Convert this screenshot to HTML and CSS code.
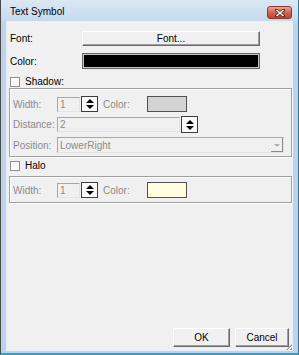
FILE: index.html
```html
<!DOCTYPE html>
<html lang="en">
  <head>
    <meta charset="UTF-8" />
    <title>Text Symbol</title>
    <link rel="stylesheet" href="styles.css">
  </head>
  <body>
    <div class="window">
      <div class="titlebar">
        <span class="title">Text Symbol</span>
        <span class="close">
          <svg width="10" height="8" viewBox="0 0 10 8">
            <path d="M1.5 1 L8.5 7 M8.5 1 L1.5 7" stroke="#5a2418" stroke-width="3" stroke-linecap="square" />
            <path d="M1.5 1 L8.5 7 M8.5 1 L1.5 7" stroke="#fff" stroke-width="1.6" />
          </svg>
        </span>
      </div>

      <div class="client">
        <div class="row font-row">
          <span class="lbl">Font:</span>
          <span class="btn font-btn">Font...</span>
        </div>
        <div class="row color-row">
          <span class="lbl">Color:</span>
          <span class="swatch big"></span>
        </div>

        <div class="check shadow-check"><span class="box"></span>Shadow:</div>
        <div class="group shadow-group">
          <div class="grow">
            <span class="glbl">Width:</span>
            <span class="field small">1</span>
            <span class="spin"><i class="up"></i><i class="down"></i></span>
            <span class="glbl color-lbl">Color:</span>
            <span class="swatch gray"></span>
          </div>
          <div class="grow dist">
            <span class="glbl">Distance:</span>
            <span class="field wide">2</span>
            <span class="spin tall"><i class="up"></i><i class="down"></i></span>
          </div>
          <div class="grow">
            <span class="glbl">Position:</span>
            <span class="field combo">LowerRight<span class="arrow"></span></span>
          </div>
        </div>

        <div class="check halo-check"><span class="box"></span>Halo</div>
        <div class="group halo-group">
          <div class="grow">
            <span class="glbl">Width:</span>
            <span class="field small">1</span>
            <span class="spin"><i class="up"></i><i class="down"></i></span>
            <span class="glbl color-lbl">Color:</span>
            <span class="swatch yellow"></span>
          </div>
        </div>

        <div class="actions">
          <span class="btn ok">OK</span>
          <span class="btn cancel">Cancel</span>
        </div>
        <span class="grip"></span>
      </div>
    </div>
  </body>
</html>
```

FILE: styles.css
```css
body {
  margin: 0;
  font: normal 10px "Liberation Sans", Arial, sans-serif;
  color: #000;
}

.window {
  width: 299px;
  height: 355px;
  box-sizing: border-box;
  display: flex;
  flex-direction: column;
  background: #bcd3ea;
  border-left: 1px solid #4a4a4a;
  border-right: 1px solid #3f6f8f;
  border-bottom: 2px solid #2aa2c4;
}

.titlebar {
  height: 21px;
  display: flex;
  align-items: center;
  padding: 0 6px 0 9px;
  background: linear-gradient(#dbe8f5, #c6d9ee);
}

.title {
  flex: 1;
  font-size: 10px;
  margin-top: 2px;
}

.close {
  width: 23px;
  height: 11px;
  margin-top: 4px;
  display: flex;
  align-items: center;
  justify-content: center;
  border: 1px solid #8d3a2b;
  border-radius: 3px;
  background: linear-gradient(#e7a596, #d3654e 50%, #c2442c);
}

.client {
  position: relative;
  margin: 0 5px 2px 5px;
  height: 330px;
  box-sizing: border-box;
  border: 1px solid #e9eff7;
  background: #f0f0f0;
  display: flex;
  flex-direction: column;
}

.row {
  display: flex;
  align-items: center;
}

.lbl {
  width: 72px;
  padding-left: 3px;
}

.font-row {
  margin-top: 9px;
  height: 15px;
}

.btn {
  box-sizing: border-box;
  display: flex;
  align-items: center;
  justify-content: center;
  background: #f0f0f0;
  border: 1px solid;
  border-color: #fff #696969 #696969 #fff;
  box-shadow: inset -1px -1px 0 #a0a0a0;
}

.font-btn {
  width: 178px;
  height: 15px;
}

.color-row {
  margin-top: 7px;
  height: 16px;
}

.swatch {
  box-sizing: border-box;
  display: block;
}

.swatch.big {
  width: 178px;
  height: 16px;
  background: #000;
  border: 1px solid #646464;
  box-shadow: inset 0 0 0 1px #c8c8c8;
}

.check {
  display: flex;
  align-items: center;
  height: 13px;
  padding-left: 3px;
}

.shadow-check {
  margin-top: 6px;
}

.halo-check {
  margin-top: 2px;
}

.box {
  width: 10px;
  height: 10px;
  box-sizing: border-box;
  margin-right: 5px;
  background: #fbfbfb;
  border: 1px solid #8e8f8f;
}

.group {
  margin-left: 2px;
  width: 283px;
  box-sizing: border-box;
  border: 1px solid #a0a0a0;
  box-shadow: inset 1px 1px 0 #fff, 1px 1px 0 #fff;
  color: #8a8a8a;
}

.shadow-group {
  height: 69px;
  padding: 7px 3px 0 3px;
}

.halo-group {
  height: 27px;
  margin-top: 4px;
  padding: 5px 3px 0 3px;
}

.grow {
  display: flex;
  align-items: center;
  height: 16px;
}

.grow.dist {
  height: 17px;
  margin: 4px 0;
}

.glbl {
  width: 44px;
}

.color-lbl {
  width: 44px;
  margin-left: 5px;
}

.field {
  box-sizing: border-box;
  height: 15px;
  display: flex;
  align-items: center;
  padding-left: 2px;
  border: 1px solid;
  border-color: #a7a7a7 #e3e3e3 #e3e3e3 #a7a7a7;
  background: #f0f0f0;
}

.field.small {
  width: 23px;
}

.field.wide {
  width: 123px;
}

.field.combo {
  position: relative;
  width: 227px;
  height: 16px;
}

.arrow {
  position: absolute;
  right: 0;
  top: 0;
  width: 12px;
  height: 14px;
  box-sizing: border-box;
  border-right: 1px solid #8a8a8a;
  border-bottom: 1px solid #8a8a8a;
}

.arrow::after {
  content: "";
  position: absolute;
  left: 3px;
  top: 6px;
  border-left: 3px solid transparent;
  border-right: 3px solid transparent;
  border-top: 3px solid #b0b0b0;
}

.spin {
  box-sizing: border-box;
  width: 17px;
  height: 16px;
  margin-left: 1px;
  border: 1px solid #3c3c3c;
  background: #fafafa;
  display: flex;
  flex-direction: column;
  align-items: center;
  justify-content: center;
  gap: 2px;
}

.spin.tall {
  height: 17px;
}

.spin i {
  display: block;
  border-left: 4px solid transparent;
  border-right: 4px solid transparent;
}

.spin .up {
  border-bottom: 4px solid #000;
}

.spin .down {
  border-top: 4px solid #000;
}

.swatch.gray,
.swatch.yellow {
  width: 40px;
  height: 16px;
  border: 1px solid #505050;
}

.swatch.gray {
  background: #d3d3d3;
}

.swatch.yellow {
  background: #ffffe0;
}

.actions {
  margin-top: auto;
  margin-bottom: 3px;
  display: flex;
  justify-content: flex-end;
  gap: 5px;
  padding-right: 3px;
}

.ok {
  width: 57px;
  height: 19px;
}

.cancel {
  width: 54px;
  height: 19px;
}

.grip {
  position: absolute;
  right: 0;
  bottom: 0;
  width: 6px;
  height: 6px;
  background: repeating-linear-gradient(135deg, transparent 0 1px, #9a9a9a 1px 2px, #fff 2px 3px);
  clip-path: polygon(100% 0, 100% 100%, 0 100%);
}
```
